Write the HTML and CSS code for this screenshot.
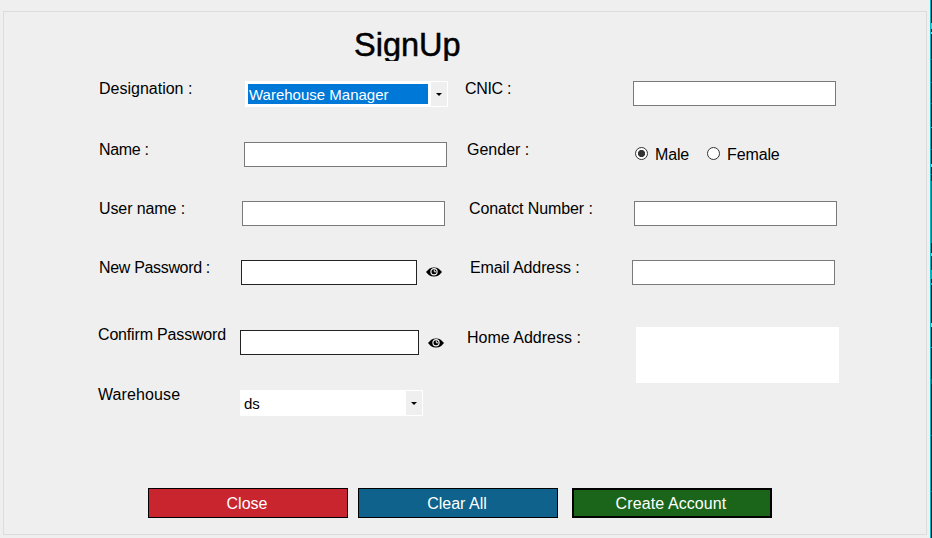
FILE: index.html
```html
<!DOCTYPE html>
<html lang="en">
<head>
<meta charset="utf-8">
<title>SignUp</title>
<link rel="stylesheet" href="styles.css">
</head>
<body>
<svg class="defs" width="0" height="0">
  <symbol id="eye" viewBox="0 0 16 10">
    <path fill="#000" d="M0 5C3.200 .9 5.500 .4 8 .4S12.800 .9 16 5C12.800 9 10.500 9.500 8 9.500S3.200 9 0 5z"/>
    <circle cx="8" cy="4.700" r="3.100" fill="#000" stroke="#efefef" stroke-width="1.200"/>
    <path d="M8.300 2.600v2.200h1.900" fill="none" stroke="#efefef" stroke-width="1"/>
  </symbol>
</svg>
<main class="window">
  <form class="panel">
    <h1 class="title">SignUp</h1>
    <div class="fields">
      <label class="label in1">Designation :</label>
      <div class="combo combo-wide in5"><span class="value selected">Warehouse Manager</span><span class="drop"></span></div>
      <label class="label tight">CNIC :</label>
      <input class="text in1" type="text">

      <label class="label tight in1">Name :</label>
      <input class="text in4" type="text">
      <label class="label in2">Gender :</label>
      <div class="radios">
        <span class="radio"><i class="dot on"></i>Male</span>
        <span class="radio"><i class="dot"></i>Female</span>
      </div>

      <label class="label snug in1">User name :</label>
      <input class="text in2" type="text">
      <label class="label snug in4">Conatct Number :</label>
      <input class="text in2" type="text">

      <label class="label tight in1">New Password :</label>
      <div class="secret in1"><input class="text pass" type="password"><svg class="eye"><use href="#eye"/></svg></div>
      <label class="label snug in5">Email Address :</label>
      <input class="text" type="text">

      <label class="label snugger">Confirm Password</label>
      <div class="secret lower"><input class="text pass pass-wide" type="password"><svg class="eye eye-low"><use href="#eye"/></svg></div>
      <label class="label home in2">Home Address :</label>
      <textarea class="address in4"></textarea>

      <label class="label loose">Warehouse</label>
      <div class="combo lower"><span class="value">ds</span><span class="drop"></span></div>
    </div>
    <div class="actions">
      <button class="btn close" type="button">Close</button>
      <button class="btn clear" type="button">Clear All</button>
      <button class="btn create" type="button">Create Account</button>
    </div>
  </form>
  <div class="edge"></div>
</main>
</body>
</html>
```
FILE: styles.css
```css
* { box-sizing: border-box; }
body { margin: 0; background: #efefef; font: 16px/18px "Liberation Sans", Arial, sans-serif; color: #000; overflow: hidden; }
.defs { display: block; height: 0; }
.window { display: flex; height: 538px; padding-left: 3px; }
.panel { width: 924px; height: 524px; margin: 11px 3px 0 0; border: 1px solid #dcdcdc; }
.edge {
  width: 2px;
  border-left: 1px solid #00b7c3;
  background: linear-gradient(#071216 23px, #86b3b5 23px 29px, #071216 29px 32px, #a0c0c0 32px 34px, #071216 34px 59px, #24545a 59px 60px, #04100f 60px 82px, #24545a 82px 83px, #04100f 83px 103px, #24545a 103px 104px, #04100f 104px 127px, #7faaae 127px 128px, #04100f 128px 149px, #24545a 149px 150px, #04100f 150px 164px, #9fcaca 164px 167px, #04100f 167px 174px, #24545a 174px 175px, #071216 175px 181px, #216970 181px 243px, #071216 243px 253px, #8fc6c4 253px 256px, #10292c 256px 270px, #25a3a3 270px 279px, #071216 279px 283px, #6a9295 283px 285px, #04100f 285px 323px, #b5c9ae 323px 327px, #04100f 327px 347px, #659295 347px 348px, #04100f 348px 379px, #7a2e36 379px 384px, #04100f 384px 435px, #24545a 435px 436px, #04100f 436px 491px, #24545a 491px 492px, #04100f 492px) no-repeat;
}

.title { height: 34px; margin: 15px 0 0 350px; overflow: hidden; font-size: 32.500px; line-height: 37px; font-weight: 400; -webkit-text-stroke: .5px #000; }
.fields { display: grid; grid-template-columns: 142px 225px 167px 210px; grid-template-rows: 61px 59px 59px 67px 60px 60px; align-items: start; margin: 19px 0 0 94px; }
.label { white-space: nowrap; }
.tight { letter-spacing: -.33px; }
.snug { letter-spacing: -.1px; }
.snugger { letter-spacing: -.17px; }
.loose { letter-spacing: .1px; }
.home { margin-top: 3px; }
.in1 { margin-left: 1px; }
.in2 { margin-left: 2px; }
.in4 { margin-left: 4px; }
.in5 { margin-left: 5px; }

.text { width: 203px; height: 25px; margin-top: 1px; border: 1px solid #7a7a7a; background: #fff; padding: 0 4px; font: inherit; outline: 0; }
.pass { width: 176px; margin-top: 0; border-color: #222; }
.pass-wide { width: 179px; }
.secret { display: flex; gap: 9px; margin-top: 1px; }
.eye { width: 16px; height: 10px; margin-top: 7px; }
.eye-low { margin-top: 8px; }
.address { width: 203px; height: 56px; margin-top: 1px; border: 0; background: #fff; resize: none; }

.combo { display: flex; justify-content: space-between; width: 183px; height: 26px; margin-top: 1px; padding: 1px; background: #fff; font-size: 15px; }
.combo-wide { width: 203px; }
.lower { margin-top: 4px; }
.value { padding: 4px 3px; }
.selected { width: 180px; height: 20px; margin: 2px; padding: 2px 1px; background: #0078d7; color: #fff; white-space: nowrap; }
.drop { display: flex; align-items: center; justify-content: center; width: 16px; background: #efefef; }
.drop::before { content: ""; border: 3px solid transparent; border-top-color: #000; border-bottom: 0; }

.radios { display: flex; gap: 18px; margin: 5px 0 0 3px; }
.radio { display: flex; gap: 7px; letter-spacing: -.15px; }
.dot { width: 13px; height: 13px; margin-top: 1px; border: 1px solid #333; border-radius: 50%; background: #fff; }
.on { background: radial-gradient(circle, #333 3.300px, #fff 3.900px); }

.actions { display: flex; gap: 10px; margin: 42px 0 0 144px; }
.btn { width: 200px; height: 30px; border: 1px solid #000; padding: 2px 2px 0 0; color: #fff; font: inherit; }
.close { background: #c8252f; }
.clear { background: #0e628c; }
.create { margin-left: 4px; border-width: 2px; background: #1b651b; letter-spacing: .1px; }
```
